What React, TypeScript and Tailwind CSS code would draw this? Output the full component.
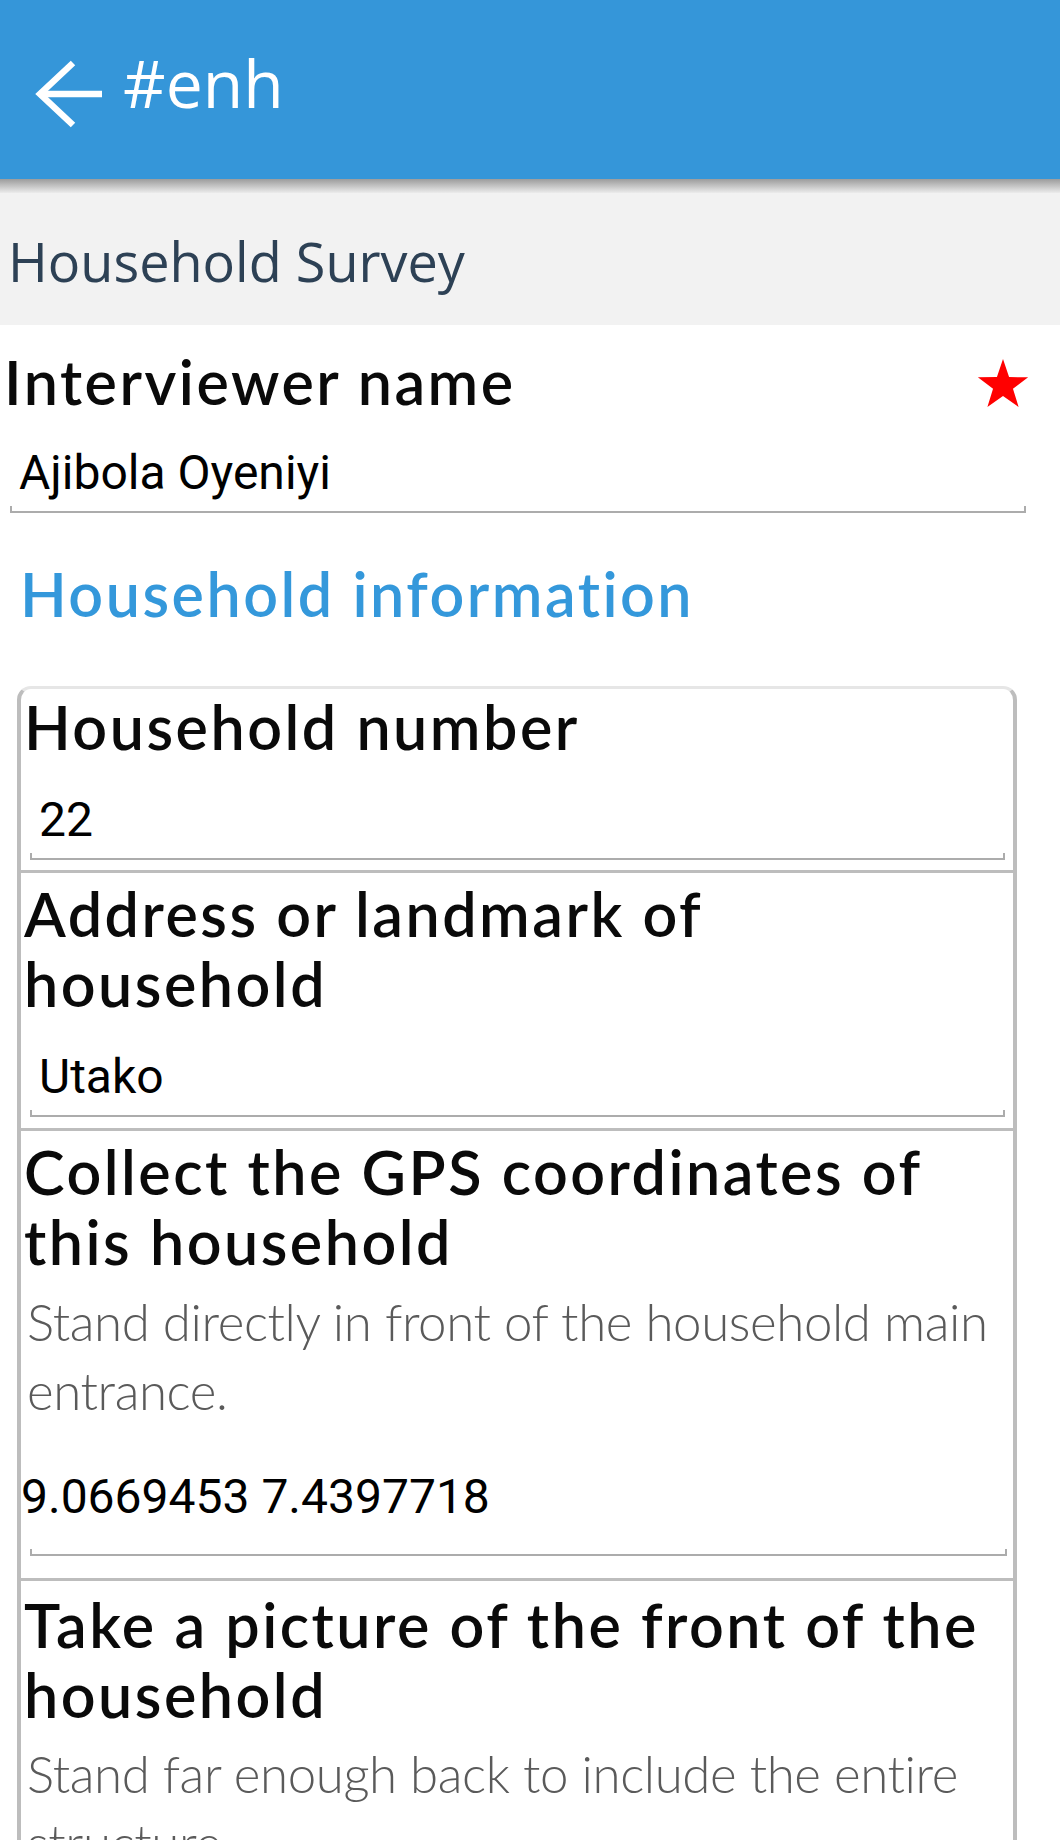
import React from "react";

function Ticks() {
  return (
    <>
      <span className="absolute left-0 bottom-[-2px] w-[2px] h-[7px] bg-[#acacac]" />
      <span className="absolute right-0 bottom-[-2px] w-[2px] h-[7px] bg-[#acacac]" />
    </>
  );
}

function Field({ value, outer }: { value: string; outer: string }) {
  return (
    <div className={`relative border-b-2 border-[#acacac] ${outer}`}>
      <Ticks />
      <div className="pl-[9px] pb-[10px] font-['Roboto',sans-serif] text-[48px] leading-[56px] text-black">
        {value}
      </div>
    </div>
  );
}

const heading =
  "font-['Lato','Noto_Sans',sans-serif] font-semibold tracking-[2.5px] text-[61px] leading-[70px] text-[#0a0a0a] pl-[3px]";
const hint =
  "font-['Lato','Noto_Sans',sans-serif] font-light tracking-[-0.4px] text-[51px] leading-[69px] text-[#5a5a5a] pl-[6px]";

export default function App() {
  return (
    <div className="w-[1060px] h-[1840px] bg-white overflow-hidden">
      <header className="h-[179px] bg-[#3596d9] flex items-start">
        <svg
          className="mt-[59px] ml-[35px]"
          width="70"
          height="70"
          viewBox="0 0 70 70"
          fill="none"
          stroke="white"
          strokeWidth="6.5"
        >
          <path d="M4 35 H67" />
          <path d="M38 4 L5 35 L38 66" strokeLinejoin="miter" />
        </svg>
        <span className="mt-[49px] ml-[18px] font-['Open_Sans',sans-serif] text-[66px] leading-[66px] text-white">
          #enh
        </span>
      </header>
      <div className="h-[14px] bg-gradient-to-b from-[#9c9c9c] via-[#c4c4c4] to-[#ececec]" />
      <div className="h-[132px] bg-[#f2f2f2] pt-[32px] pl-[8px] font-['Open_Sans',sans-serif] text-[54px] leading-[72px] text-[#2d4155]">
        Household Survey
      </div>

      <div className="pt-[22px]">
        <div className="flex items-start justify-between pr-[31px]">
          <div className={heading + " pl-[4px]"}>Interviewer name</div>
          <svg className="mt-[12px]" width="52" height="50" viewBox="0 0 24 23">
            <path
              fill="#ff0000"
              d="M12 0 L14.8 8.3 L23.6 8.4 L16.6 13.7 L19.2 22.1 L12 17 L4.8 22.1 L7.4 13.7 L0.4 8.4 L9.2 8.3 Z"
            />
          </svg>
        </div>
        <Field value="Ajibola Oyeniyi" outer="mt-[28px] ml-[10px] mr-[34px]" />
      </div>

      <div className="pt-[46px] pl-[20px] font-['Lato','Noto_Sans',sans-serif] font-semibold tracking-[2.5px] text-[61px] leading-[70px] text-[#3498db]">
        Household information
      </div>

      <div className="mt-[57px] ml-[17px] w-[1000px] border-x-[4px] border-t-[3px] border-[#bdbdbd] border-t-[#e6e6e6] rounded-t-[14px]">
        <div className="border-b-[3px] border-[#bdbdbd] pt-[3px]">
          <div className={heading}>Household number</div>
          <Field value="22" outer="mt-[30px] ml-[9px] mr-[8px] mb-[10px]" />
        </div>
        <div className="border-b-[3px] border-[#bdbdbd] pt-[6px]">
          <div className={heading}>Address or landmark of household</div>
          <Field value="Utako" outer="mt-[30px] ml-[9px] mr-[8px] mb-[11px]" />
        </div>
        <div className="border-b-[3px] border-[#bdbdbd] pt-[6px]">
          <div className={heading}>Collect the GPS coordinates of this household</div>
          <div className={hint + " mt-[10px]"}>
            Stand directly in front of the household main entrance.
          </div>
          <div className="mt-[44px] font-['Roboto',sans-serif] text-[48px] leading-[56px] text-black">
            9.0669453 7.4397718
          </div>
          <div className="relative mt-[29px] ml-[9px] mr-[6px] mb-[22px] border-b-2 border-[#acacac]">
            <Ticks />
          </div>
        </div>
        <div className="pt-[9px]">
          <div className={heading}>Take a picture of the front of the household</div>
          <div className={hint + " mt-[9px]"}>
            Stand far enough back to include the entire structure.
          </div>
        </div>
      </div>
    </div>
  );
}
